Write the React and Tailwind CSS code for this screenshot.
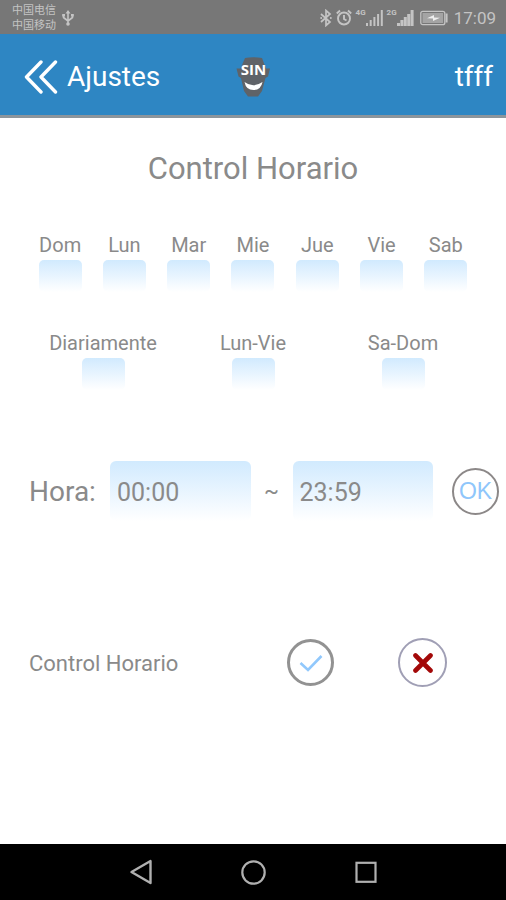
import React from "react";

const DAYS = ["Dom", "Lun", "Mar", "Mie", "Jue", "Vie", "Sab"];
const GROUPS = ["Diariamente", "Lun-Vie", "Sa-Dom"];

function StatusBar() {
  return (
    <div className="flex h-[34px] items-center bg-[#777777] pt-[2px] pr-[10px] pl-3 text-[#c4c4c4]">
      <div className="font-['Roboto','Noto_Sans_CJK_SC',sans-serif] text-[11px] leading-[15px]">
        <div>中国电信</div>
        <div>中国移动</div>
      </div>
      <svg className="ml-[6px] h-4 w-3" viewBox="0 0 12 16" fill="none" stroke="currentColor" strokeWidth="1.6" aria-hidden="true">
        <path d="M6 2v12M1.5 5v2.5L6 11M10.5 5v2.5L6 11" />
        <path d="M6 0l2.5 3.500h-5zM.2 4h2.800v2.500H.2zM9 4h2.800v2.500H9z" fill="currentColor" stroke="none" />
        <circle cx="6" cy="14" r="1.8" fill="currentColor" stroke="none" />
      </svg>
      <div className="ml-auto flex items-center">
        <svg className="h-[18px] w-3" viewBox="0 0 12 18" fill="none" stroke="currentColor" strokeWidth="1.7" aria-hidden="true">
          <path d="M1 5l9 8-4 3.5v-15L10 5l-9 8" />
          <circle cx="1.2" cy="9" r="1" fill="currentColor" stroke="none" />
          <circle cx="10.8" cy="9" r="1" fill="currentColor" stroke="none" />
        </svg>
        <svg className="ml-1 h-[18px] w-4" viewBox="0 0 16 18" fill="none" stroke="currentColor" strokeWidth="1.9" aria-hidden="true">
          <circle cx="8" cy="9.5" r="6" />
          <path d="M8 6v4l2.5 1.5M.8 4.5L4 1.5M15.2 4.5L12 1.5" />
        </svg>
        <span className="ml-1 self-start font-[Roboto,sans-serif] text-[8px] leading-[9px] font-bold">4G</span>
        <svg className="h-4 w-[17px]" viewBox="0 0 17 16" fill="currentColor" aria-hidden="true">
          <path d="M0 13h2v3H0zM3.7 10h2v6h-2zM7.4 7h2v9h-2zM11.1 4h2v12h-2zM14.8 0h2v16h-2z" />
        </svg>
        <span className="ml-1 self-start font-[Roboto,sans-serif] text-[8px] leading-[9px] font-bold">2G</span>
        <svg className="h-4 w-[17px]" viewBox="0 0 17 16" fill="currentColor" aria-hidden="true">
          <path d="M0 13h3v3H0zM3.4 10h3v6h-3zM6.8 7h3v9h-3zM10.2 4h3v12h-3zM13.6 0h3v16h-3z" />
        </svg>
        <svg className="ml-[6px] h-4 w-[29px]" viewBox="0 0 29 16" aria-hidden="true">
          <rect x="0.8" y="1.3" width="24" height="13.4" rx="2" fill="none" stroke="currentColor" strokeWidth="1.3" />
          <rect x="2.5" y="3" width="20.6" height="10" fill="#a4a4a4" />
          <path d="M26.6 3.5v9" stroke="currentColor" strokeWidth="2" />
          <path d="M7 8.3l7-3.3v2.4l6 .3-7 3.3V8.6z" fill="#eeeeee" />
        </svg>
        <span className="ml-[5px] font-[Roboto,sans-serif] text-[17px] leading-5">17:09</span>
      </div>
    </div>
  );
}

function Header() {
  return (
    <header className="grid h-[84px] grid-cols-[1fr_auto_1fr] items-center border-b-3 border-[#8c959c] bg-[#2e86c3] px-[13px] pt-1 font-[Roboto,sans-serif] text-[28px] leading-9 text-white">
      <button type="button" className="flex items-center gap-[9px] justify-self-start pl-[11px]">
        <svg className="h-[34px] w-[34px]" viewBox="0 0 34 34" fill="none" stroke="currentColor" strokeWidth="3.400" strokeLinecap="round" strokeLinejoin="round" aria-hidden="true">
          <path d="M17 2L2.5 17 17 32M31.5 2L17 17l14.5 15" />
        </svg>
        Ajustes
      </button>
      <svg className="h-10 w-9" viewBox="0 0 36 40" role="img" aria-label="SIN">
        <path d="M10 1Q18-.5 27 1L31 11.500h4l-2 8-2.500 1.500L27 34l-4 5.500H13L9 34 6 21l-2.500-1.500-2-8h4z" fill="#5f6368" />
        <text x="18.5" y="18" textAnchor="middle" fill="#ffffff" className="font-['Open_Sans',sans-serif] text-[15px] font-bold">SIN</text>
        <path d="M9.500 25Q18 31.500 27.500 25Q26 33 18.500 33Q11 33 9.500 25z" fill="#ffffff" />
      </svg>
      <span className="justify-self-end">tfff</span>
    </header>
  );
}

function DayBox({ label }) {
  return (
    <label className="flex flex-col items-center text-[20px] leading-6">
      {label}
      <input type="checkbox" className="mt-[3px] h-8 w-[43px] appearance-none rounded-[5px] bg-linear-to-b from-[#d1eafe] to-white" />
    </label>
  );
}

function TimeField({ label, value }) {
  return (
    <input
      type="text"
      aria-label={label}
      defaultValue={value}
      className="h-[60px] w-0 min-w-0 flex-1 rounded-md bg-linear-to-b from-[#d1eafe] to-white px-[7px] pt-[2px] text-[25px]"
    />
  );
}

export default function App() {
  return (
    <div className="flex min-h-screen flex-col bg-white">
      <StatusBar />
      <Header />
      <main className="flex-1 font-[Roboto,sans-serif] text-[#8a8a8a]">
        <h1 className="mt-[33px] text-center text-[31px] leading-9">Control Horario</h1>
        <div className="mt-[46px] grid grid-cols-7 px-7">
          {DAYS.map((day) => (
            <DayBox key={day} label={day} />
          ))}
        </div>
        <div className="mt-[39px] grid grid-cols-3 px-7">
          {GROUPS.map((group) => (
            <DayBox key={group} label={group} />
          ))}
        </div>
        <div className="mt-[71px] flex items-center pr-[7px] pl-[29px]">
          <span className="w-[81px] pt-[2px] text-[28px] leading-9">Hora:</span>
          <TimeField label="Hora de inicio" value="00:00" />
          <span className="w-[42px] text-center text-[22px] leading-6">~</span>
          <TimeField label="Hora de fin" value="23:59" />
          <button type="button" className="ml-[19px] size-[47px] shrink-0 rounded-full border-2 border-[#8c8888] font-['Liberation_Sans',sans-serif] text-[23px] leading-6 text-[#8fc6fb]">
            OK
          </button>
        </div>
        <div className="mt-[117px] flex items-center pr-[59px] pl-[29px]">
          <span className="pt-[2px] text-[22px] leading-7">Control Horario</span>
          <button type="button" aria-label="Activar" className="ml-auto flex size-[47px] items-center justify-center rounded-full border-3 border-[#929292]">
            <svg className="h-[18px] w-6" viewBox="0 0 24 18" fill="none" stroke="#91c8fc" strokeWidth="2.600" aria-hidden="true">
              <path d="M1.500 9l7.500 7L22.500 2" />
            </svg>
          </button>
          <button type="button" aria-label="Desactivar" className="ml-16 flex size-[49px] items-center justify-center rounded-full border-2 border-[#a09fb5]">
            <svg className="size-5" viewBox="0 0 20 20" fill="none" stroke="#a30808" strokeWidth="4.600" strokeLinecap="round" aria-hidden="true">
              <path d="M2.500 2.500l15 15M17.500 2.500l-15 15" />
            </svg>
          </button>
        </div>
      </main>
      <nav className="flex h-14 items-center justify-center gap-[86px] bg-black text-[#b0b0b0]">
        <button type="button" aria-label="Atrás">
          <svg className="size-[26px]" viewBox="0 0 26 26" fill="none" stroke="currentColor" strokeWidth="2.400" strokeLinejoin="round" aria-hidden="true">
            <path d="M22.500 2v22L3.500 13z" />
          </svg>
        </button>
        <button type="button" aria-label="Inicio">
          <svg className="size-[26px]" viewBox="0 0 26 26" fill="none" stroke="currentColor" strokeWidth="2.200" aria-hidden="true">
            <circle cx="13.500" cy="13.500" r="11.200" />
          </svg>
        </button>
        <button type="button" aria-label="Recientes">
          <svg className="size-[26px]" viewBox="0 0 26 26" fill="none" stroke="currentColor" strokeWidth="2.200" aria-hidden="true">
            <rect x="4.500" y="3.800" width="19" height="19" />
          </svg>
        </button>
      </nav>
    </div>
  );
}
